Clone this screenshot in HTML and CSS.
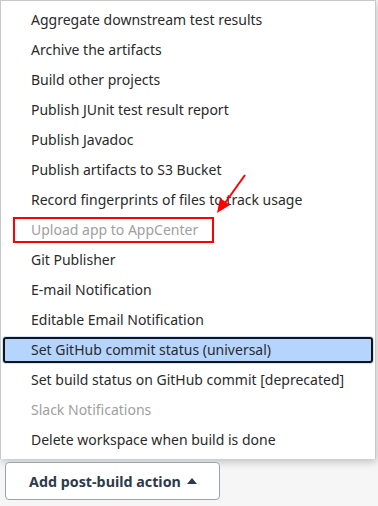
FILE: index.html
```html
<!DOCTYPE html>
<html lang="en">

<head>
  <meta charset="UTF-8">
  <title>Add post-build action</title>
  <link rel="stylesheet" href="styles.css">
</head>

<body>
  <div class="page">
    <!-- Dropdown menu -->
    <ul class="menu">
      <li class="menu-item">Aggregate downstream test results</li>
      <li class="menu-item">Archive the artifacts</li>
      <li class="menu-item">Build other projects</li>
      <li class="menu-item">Publish JUnit test result report</li>
      <li class="menu-item">Publish Javadoc</li>
      <li class="menu-item">Publish artifacts to S3 Bucket</li>
      <li class="menu-item">Record fingerprints of files to track usage</li>
      <li class="menu-item disabled"><span class="marked">Upload app to AppCenter</span></li>
      <li class="menu-item">Git Publisher</li>
      <li class="menu-item">E-mail Notification</li>
      <li class="menu-item">Editable Email Notification</li>
      <li class="menu-item selected">Set GitHub commit status (universal)</li>
      <li class="menu-item">Set build status on GitHub commit [deprecated]</li>
      <li class="menu-item disabled">Slack Notifications</li>
      <li class="menu-item">Delete workspace when build is done</li>
    </ul>

    <!-- annotation arrow -->
    <svg class="arrow" width="40" height="50" viewBox="0 0 40 50">
      <line x1="34" y1="4" x2="14" y2="32" stroke="#f00" stroke-width="2" />
      <polygon points="6,42 9,27 19,34" fill="#f00" />
    </svg>

    <button class="add-btn">Add post-build action <span class="caret"></span></button>
  </div>
</body>

</html>
```

FILE: styles.css
```css
body {
  margin: 0;
  font-family: "Noto Sans", sans-serif;
  background: #f6f6f6;
}

.page {
  position: relative;
  width: 378px;
  height: 506px;
}

.menu {
  list-style: none;
  margin: 0;
  padding: 4px 0 4px;
  width: 376px;
  box-sizing: border-box;
  background: white;
  border: 1px solid #c8c8c8;
  border-bottom: none;
  box-shadow: 1px 3px 8px rgba(0, 0, 0, 0.22);
}

.menu-item {
  height: 30px;
  line-height: 30px;
  padding-left: 30px;
  font-size: 14px;
  color: #2a2a2a;
  white-space: nowrap;
}

.menu-item.disabled {
  color: #a0a0a0;
}

.menu-item.selected {
  height: 22px;
  line-height: 22px;
  margin: 2px;
  padding-left: 26px;
  background: #b5d5ff;
  border: 2px solid #151515;
  border-radius: 3px;
  box-shadow: 0 0 0 1px #cfe3ff;
}

.marked {
  position: relative;
  display: inline-block;
  line-height: 30px;
}

.marked::before {
  content: "";
  position: absolute;
  left: -18px;
  right: -16px;
  top: 2px;
  bottom: 2px;
  border: 2px solid #f00;
}

.arrow {
  position: absolute;
  left: 211px;
  top: 171px;
}

.add-btn {
  display: flex;
  align-items: center;
  margin: 3px 0 0 5px;
  height: 38px;
  padding: 0 22px 0 23px;
  background: white;
  border: 1px solid #9aa4ae;
  border-radius: 4px;
  font-family: "Noto Sans", sans-serif;
  font-size: 14.3px;
  font-weight: bold;
  color: #2e3a4a;
}

.caret {
  width: 0;
  height: 0;
  margin-left: 6px;
  border-left: 5px solid transparent;
  border-right: 5px solid transparent;
  border-bottom: 6px solid #2e3a4a;
}
```
